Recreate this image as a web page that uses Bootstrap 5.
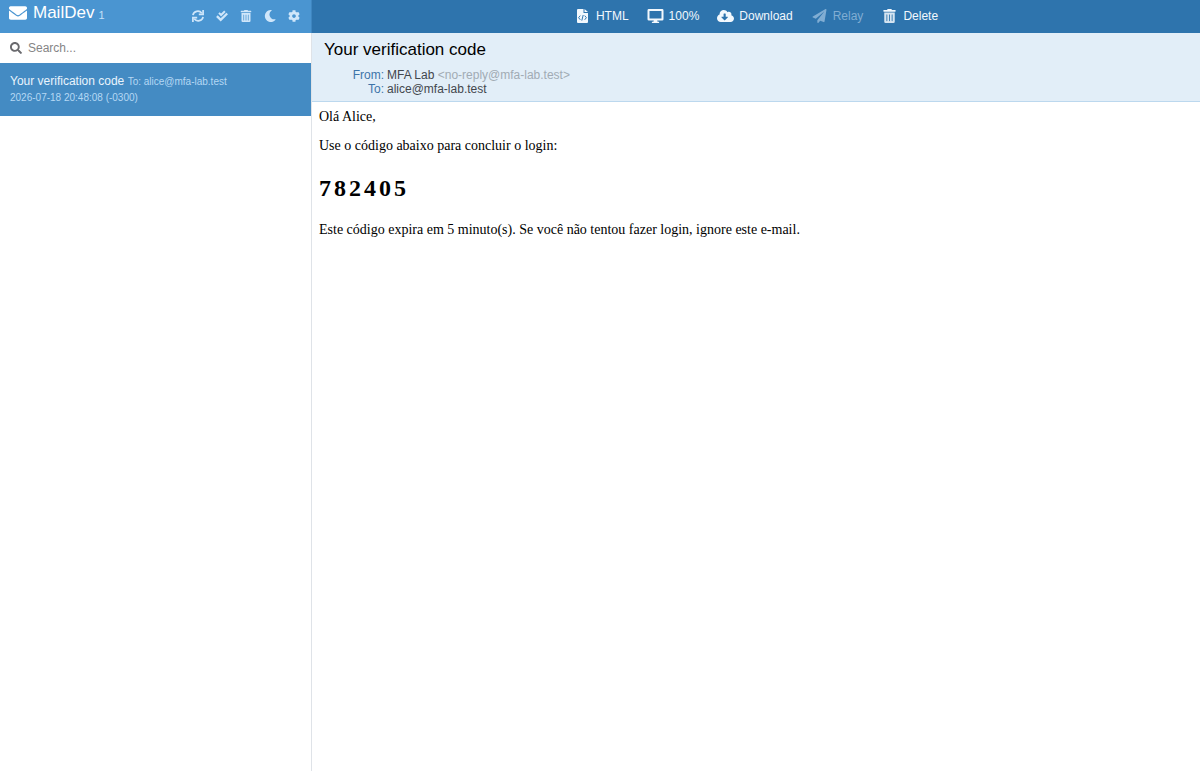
<!DOCTYPE html>
<html lang="en">
<head>
<meta charset="utf-8">
<meta name="viewport" content="width=device-width, initial-scale=1">
<title>MailDev</title>
<link href="https://cdn.jsdelivr.net/npm/bootstrap@5.3.0/dist/css/bootstrap.min.css" rel="stylesheet">
<style>
  body { font-family: "Liberation Sans", Arial, sans-serif; font-size: 12px; line-height: 16px; color: #000; background: #fff; }
  svg { display: block; fill: currentColor; flex: none; }
  button, input { font: inherit; }
  .sidebar { flex: 0 0 26%; min-width: 240px; border-right: 1px solid #dfe3e8; }
  .topbar { height: 33px; padding-bottom: 2px; }
  .side-head { background: #4a95d1; color: #fff; padding-left: 9px; padding-right: 11px; margin-right: -1px; border-right: 1px solid #3f86c0; }
  .brand { font-size: 17px; line-height: 26px; color: #fff; gap: 6px; }
  .unread { font-size: 11px; color: #c4e0f8; line-height: 16px; margin-left: 4px; padding-top: 4px; }
  .tools { gap: 12px; color: #cfe6fa; }
  .plain { background: none; border: 0; padding: 0; color: inherit; }
  .search { height: 30px; padding: 0 10px; gap: 6px; color: #6a6a6e; }
  .search input { border: 0; outline: 0; padding: 0; color: #333; background: transparent; }
  .search input::placeholder { color: #858585; opacity: 1; }
  .mail-item { background: #448bc3; color: #e9f4fd; padding: 10px 10px; }
  .mail-item small { font-size: 10px; color: #b5d8f4; }
  .toolbar { background: #2e74ad; color: #f2f8fd; gap: 18px; }
  .toolbar button { gap: 5px; }
  .toolbar svg { width: 17px; height: 14px; }
  .toolbar button:disabled { color: #80add3; }
  .mail-head { background: #e2eef8; border-bottom: 1px solid #bcd8ee; padding: 7px 12px 5px; }
  .mail-head h1 { font-size: 17px; line-height: 20px; margin: 0 0 8px; font-weight: 400; }
  .fields { line-height: 14px; color: #42474d; grid-template-columns: 60px 1fr; column-gap: 3px; }
  .fields dt { color: #3d74a8; font-weight: 400; text-align: right; }
  .fields dd { margin: 0; }
  .fields span { color: #a1abb4; }
  .mail-body { font-family: "Liberation Serif", "Times New Roman", serif; font-size: 14px; line-height: 16px; padding: 7px 7px; }
  .mail-body p { margin: 0 0 13px; }
  .mail-body h2 { font-size: 24px; line-height: 28px; font-weight: 700; letter-spacing: 3px; margin: 20px 0; }
</style>
</head>
<body>
<div class="d-flex min-vh-100">
  <aside class="sidebar">
    <header class="side-head topbar d-flex justify-content-between">
      <a href="#" class="brand d-flex text-decoration-none align-self-start">
        <svg class="align-self-center" width="18" height="18" viewBox="0 0 512 512"><path d="M502.3 190.8c3.9-3.1 9.7-.2 9.7 4.7V400c0 26.5-21.5 48-48 48H48c-26.5 0-48-21.5-48-48V195.6c0-5 5.7-7.8 9.7-4.7 22.4 17.4 52.1 39.5 154.1 113.6 21.1 15.4 56.7 47.8 92.2 47.6 35.7.3 72-32.8 92.3-47.6 102-74.1 131.6-96.3 154-113.7zM256 320c23.2.4 56.6-29.2 73.4-41.4 132.7-96.3 142.8-104.7 173.4-128.7 5.8-4.5 9.2-11.5 9.2-18.9v-19c0-26.5-21.5-48-48-48H48c-26.5 0-48 21.5-48 48v19c0 7.4 3.4 14.3 9.2 18.9 30.6 23.9 40.7 32.4 173.4 128.7 16.8 12.2 50.2 41.8 73.4 41.4z"/></svg>
        <span class="d-flex align-items-center">MailDev <span class="unread">1</span></span>
      </a>
      <div class="tools d-flex align-items-center">
        <button class="plain" aria-label="Refresh"><svg width="12" height="12" viewBox="0 0 12 12"><g fill="none" stroke="currentColor" stroke-width="1.7"><path d="M.9 5.2A5 5 0 0 1 9.8 3.2M11.1 6.8A5 5 0 0 1 2.2 8.8"/><path d="M11.1 0v4.4H6.8M.9 12V7.6h4.3"/></g></svg></button>
        <button class="plain" aria-label="Mark all read"><svg width="12" height="12" viewBox="0 0 12 12"><g fill="none" stroke="currentColor"><path stroke-width="2" d="M3 2.9l2.1 2.1L8.9 1.2"/><path stroke-width="2.3" d="M.9 6.1l3.8 3.8 6.5-6.4"/></g></svg></button>
        <button class="plain" aria-label="Delete all"><svg width="12" height="12" viewBox="0 0 448 512"><path d="M32 464a48 48 0 0 0 48 48h288a48 48 0 0 0 48-48V128H32zm272-256a16 16 0 0 1 32 0v224a16 16 0 0 1-32 0zm-96 0a16 16 0 0 1 32 0v224a16 16 0 0 1-32 0zm-96 0a16 16 0 0 1 32 0v224a16 16 0 0 1-32 0zM432 32H312l-9.4-18.7A24 24 0 0 0 281.1 0H166.8a23.72 23.72 0 0 0-21.4 13.3L136 32H16A16 16 0 0 0 0 48v32a16 16 0 0 0 16 16h416a16 16 0 0 0 16-16V48a16 16 0 0 0-16-16z"/></svg></button>
        <button class="plain" aria-label="Dark mode"><svg width="12" height="12" viewBox="0 0 12 12"><path d="M7.3 0A6 6 0 1 0 11.3 10 .3.3 0 0 0 11 9.3 4.8 4.8 0 0 1 7.6.6.3.3 0 0 0 7.3 0z"/></svg></button>
        <button class="plain" aria-label="Settings"><svg width="12" height="12" viewBox="0 0 512 512"><path d="M487.4 315.7l-42.6-24.6c4.3-23.2 4.3-47 0-70.2l42.6-24.6c4.9-2.8 7.1-8.6 5.5-14-11.1-35.6-30-67.8-54.7-94.6-3.8-4.1-10-5.1-14.8-2.3L380.8 110c-17.9-15.4-38.5-27.3-60.8-35.1V25.8c0-5.6-3.9-10.5-9.4-11.7-36.7-8.2-74.3-7.8-109.2 0-5.5 1.2-9.4 6.1-9.4 11.7V75c-22.2 7.9-42.8 19.8-60.8 35.1L88.7 85.5c-4.9-2.8-11-1.9-14.8 2.3-24.7 26.7-43.6 58.9-54.7 94.6-1.7 5.4.6 11.2 5.5 14L67.3 221c-4.3 23.2-4.3 47 0 70.2l-42.6 24.6c-4.9 2.8-7.1 8.6-5.5 14 11.1 35.6 30 67.8 54.7 94.6 3.8 4.1 10 5.1 14.8 2.3l42.6-24.6c17.9 15.4 38.5 27.3 60.8 35.1v49.2c0 5.6 3.9 10.5 9.4 11.7 36.7 8.2 74.3 7.8 109.2 0 5.5-1.2 9.4-6.1 9.4-11.7v-49.2c22.2-7.9 42.8-19.8 60.8-35.1l42.6 24.6c4.9 2.8 11 1.9 14.8-2.3 24.7-26.7 43.6-58.9 54.7-94.6 1.5-5.5-.7-11.3-5.6-14.1zM256 336c-44.1 0-80-35.9-80-80s35.9-80 80-80 80 35.9 80 80-35.9 80-80 80z"/></svg></button>
      </div>
    </header>
    <label class="search d-flex align-items-center">
      <svg width="12" height="12" viewBox="0 0 512 512"><path d="M505 442.7L405.3 343c-4.5-4.5-10.6-7-17-7H372c27.6-35.3 44-79.7 44-128C416 93.1 322.9 0 208 0S0 93.1 0 208s93.1 208 208 208c48.3 0 92.7-16.4 128-44v16.3c0 6.4 2.5 12.5 7 17l99.7 99.7c9.4 9.4 24.6 9.4 33.9 0l28.3-28.3c9.4-9.4 9.4-24.6.1-34zM208 336c-70.7 0-128-57.2-128-128 0-70.7 57.2-128 128-128 70.7 0 128 57.2 128 128 0 70.7-57.2 128-128 128z"/></svg>
      <input class="flex-grow-1" type="text" placeholder="Search..." aria-label="Search">
    </label>
    <a href="#" class="mail-item d-block text-decoration-none">
      <div>Your verification code <small>To: alice@mfa-lab.test</small></div>
      <small class="d-block">2026-07-18 20:48:08 (-0300)</small>
    </a>
  </aside>
  <main class="flex-grow-1">
    <nav class="toolbar topbar d-flex justify-content-center align-items-center">
      <button class="plain d-flex align-items-center"><svg viewBox="0 0 11 14"><path fill-rule="evenodd" d="M1 0h5.5v4h4.5v9a1 1 0 0 1-1 1H1a1 1 0 0 1-1-1V1a1 1 0 0 1 1-1zM7.5 0L11 3H7.5z"/><path fill="none" stroke="#2e74ad" d="M3.3 6.6L1.6 8.7l1.7 2.1M7.7 6.6l1.7 2.1-1.7 2.1M6.2 6l-1.4 5.6"/></svg>HTML</button>
      <button class="plain d-flex align-items-center"><svg viewBox="0 0 16 14"><path fill-rule="evenodd" d="M1.4 0h13.2A1.4 1.4 0 0 1 16 1.4v8.8a1.4 1.4 0 0 1-1.4 1.4H9.7l.4 1.2h1.5V14H4.4v-1.2h1.5l.4-1.2H1.4A1.4 1.4 0 0 1 0 10.2V1.4A1.4 1.4 0 0 1 1.4 0zM2 2v7.6h12V2z"/></svg>100%</button>
      <button class="plain d-flex align-items-center"><svg viewBox="0 0 640 512"><path d="M537.6 226.6c4.1-10.7 6.4-22.4 6.4-34.6 0-53-43-96-96-96-19.7 0-38.1 6-53.3 16.2C367 64.2 315.3 32 256 32c-88.4 0-160 71.6-160 160 0 2.7.1 5.4.2 8.1C40.2 219.8 0 273.2 0 336c0 79.5 64.5 144 144 144h368c70.7 0 128-57.3 128-128 0-61.9-44-113.6-102.4-125.4zm-132.9 88.7L299.3 420.7c-6.2 6.2-16.4 6.2-22.6 0L171.3 315.3c-10.1-10.1-2.9-27.3 11.3-27.3H248V176c0-8.8 7.2-16 16-16h48c8.8 0 16 7.2 16 16v112h65.4c14.2 0 21.4 17.2 11.3 27.3z"/></svg>Download</button>
      <button class="plain d-flex align-items-center" disabled><svg viewBox="0 0 512 512"><path d="M476 3.2L12.5 270.6c-18.1 10.4-15.8 35.6 2.2 43.2L121 358.4l287.3-253.2c5.5-4.9 13.3 2.6 8.6 8.3L176 407v80.5c0 23.6 28.5 32.9 42.5 15.8L282 426l124.6 52.2c14.2 6 30.4-2.9 33-18.2l72-432C515 7.8 493.3-6.8 476 3.2z"/></svg>Relay</button>
      <button class="plain d-flex align-items-center"><svg viewBox="0 0 448 512"><path fill-opacity=".85" d="M32 464a48 48 0 0 0 48 48h288a48 48 0 0 0 48-48V128H32zm272-256a16 16 0 0 1 32 0v224a16 16 0 0 1-32 0zm-96 0a16 16 0 0 1 32 0v224a16 16 0 0 1-32 0zm-96 0a16 16 0 0 1 32 0v224a16 16 0 0 1-32 0z"/><path d="M432 32H312l-9.4-18.7A24 24 0 0 0 281.1 0H166.8a23.72 23.72 0 0 0-21.4 13.3L136 32H16A16 16 0 0 0 0 48v32a16 16 0 0 0 16 16h416a16 16 0 0 0 16-16V48a16 16 0 0 0-16-16z"/></svg>Delete</button>
    </nav>
    <header class="mail-head">
      <h1>Your verification code</h1>
      <dl class="fields d-grid mb-0">
        <dt>From:</dt><dd>MFA Lab <span>&lt;no-reply@mfa-lab.test&gt;</span></dd>
        <dt>To:</dt><dd>alice@mfa-lab.test</dd>
      </dl>
    </header>
    <article class="mail-body">
      <p>Olá Alice,</p>
      <p>Use o código abaixo para concluir o login:</p>
      <h2>782405</h2>
      <p>Este código expira em 5 minuto(s). Se você não tentou fazer login, ignore este e-mail.</p>
    </article>
  </main>
</div>
<script src="https://cdn.jsdelivr.net/npm/bootstrap@5.3.0/dist/js/bootstrap.bundle.min.js"></script>
</body>
</html>
